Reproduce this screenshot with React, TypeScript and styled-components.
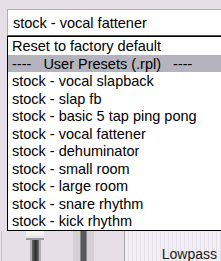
import React from 'react';
import styled, {createGlobalStyle} from "styled-components";

const presets = [
    "Reset to factory default",
    "----   User Presets (.rpl)   ----",
    "stock - vocal slapback",
    "stock - slap fb",
    "stock - basic 5 tap ping pong",
    "stock - vocal fattener",
    "stock - dehuminator",
    "stock - small room",
    "stock - large room",
    "stock - snare rhythm",
    "stock - kick rhythm",
]

export default function App() {
    return (
        <>
            <GlobalStyle/>
            <Frame>
                <Combo>stock - vocal fattener</Combo>
                <List>
                    {presets.map((p, i) => (
                        <Item key={p} selected={i === 1}>{p}</Item>
                    ))}
                </List>
                <Bottom>
                    <Rail/>
                    <Fader>
                        <Knob/>
                        <Track/>
                    </Fader>
                    <Column/>
                    <Panel>
                        <Label>Lowpass</Label>
                    </Panel>
                </Bottom>
            </Frame>
        </>
    );
}

const GlobalStyle = createGlobalStyle`
    body {
        margin: 0;
        background: #e6dfe7;
        font-family: "Liberation Sans", Arial, sans-serif;
    }
`

const Frame = styled.div`
    width: 221px;
    height: 261px;
    overflow: hidden;
    padding-top: 9px;
    box-sizing: border-box;
    display: flex;
    flex-direction: column;
`

const Combo = styled.div`
    margin-left: 7px;
    width: 240px;
    height: 27px;
    box-sizing: border-box;
    background: #fff;
    border: 1px solid #9fb3cb;
    border-bottom-color: #44566a;
    padding-left: 5px;
    font-size: 14.5px;
    line-height: 26px;
    color: #000;
    white-space: nowrap;
    flex-shrink: 0;
`

const List = styled.div`
    margin-left: 7px;
    width: 240px;
    border: 1px solid #000;
    background: #fff;
    flex-shrink: 0;
`

const Item = styled.div<{ selected?: boolean }>`
    height: 17.5px;
    line-height: 18px;
    padding-left: 4px;
    font-size: 14.5px;
    color: #000;
    white-space: pre;
    background: ${p => p.selected ? "#b5b4be" : "#fff"};
`

const Bottom = styled.div`
    flex: 1;
    display: flex;
    align-items: stretch;
`

const Rail = styled.div`
    width: 7px;
    border-left: 1px solid #ece6ec;
    box-shadow: inset 1px 0 0 #c9c1c9;
    flex-shrink: 0;
`

const Fader = styled.div`
    margin-left: 18px;
    width: 18px;
    display: flex;
    flex-direction: column;
    align-items: center;
`

const Knob = styled.div`
    width: 18px;
    height: 9px;
    background: linear-gradient(#fafafa, #e4e4e4);
    border-bottom: 2px solid #9a9a9a;
    box-sizing: border-box;
`

const Track = styled.div`
    flex: 1;
    width: 11px;
    box-sizing: border-box;
    border-left: 2px solid #b4b0b6;
    border-right: 2px solid #b4b0b6;
    background: linear-gradient(90deg, #6a6a6a, #2e2e2e 50%, #6a6a6a);
`

const Column = styled.div`
    margin-left: 29px;
    width: 21px;
    background: linear-gradient(90deg, #d4d0d6 0 35%, #8a888c 35% 40%, #5a585c 40% 62%, #8a888c 62% 67%, #d4d0d6 67%);
`

const Panel = styled.div`
    margin-left: 30px;
    flex: 1;
    border-left: 1px solid #a9a5ad;
    background:
        repeating-linear-gradient(90deg, transparent 0 3px, rgba(200, 196, 214, 0.35) 3px 4px),
        #f1eff3;
    display: flex;
    align-items: flex-end;
    justify-content: flex-end;
    padding: 0 4px 0 0;
`

const Label = styled.span`
    font-size: 14px;
    line-height: 18px;
    color: #1a1a1a;
    margin-bottom: -2px;
`
